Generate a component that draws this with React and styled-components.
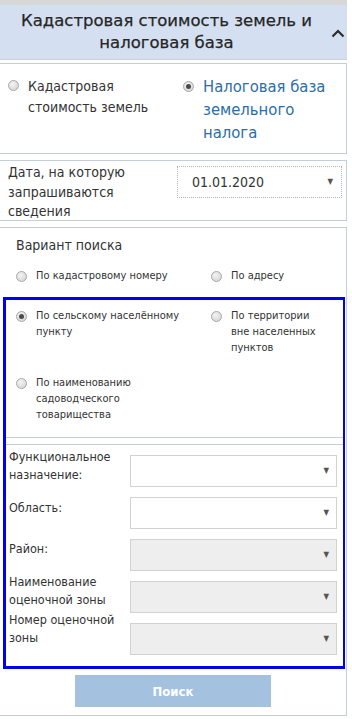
import React from "react";
import styled, { createGlobalStyle } from "styled-components";

const GlobalStyle = createGlobalStyle`
  html, body {
    margin: 0;
    padding: 0;
    background: #ffffff;
  }
  body {
    font-family: "DejaVu Sans Condensed", "DejaVu Sans", sans-serif;
    color: #333333;
  }
`;

const searchOptions = [
  { label: "По кадастровому номеру", checked: false },
  { label: "По адресу", checked: false },
];

const areaOptions = [
  { label: "По сельскому населённому пункту", checked: true, width: 160 },
  { label: "По территории вне населенных пунктов", checked: false, width: 92 },
  { label: "По наименованию садоводческого товарищества", checked: false, width: 108 },
];

const fields = [
  { label: "Функциональное назначение:", disabled: false, offset: -7 },
  { label: "Область:", disabled: false, offset: 2 },
  { label: "Район:", disabled: true, offset: 1 },
  { label: "Наименование оценочной зоны", disabled: true, offset: -8 },
  { label: "Номер оценочной зоны", disabled: true, offset: -12 },
];

const Radio = ({ checked, offset }) => (
  <RadioCircle $checked={checked} $offset={offset}>
    {checked && <RadioDot />}
  </RadioCircle>
);

const Arrow = () => <ArrowGlyph>▼</ArrowGlyph>;

const App = () => {
  return (
    <>
      <GlobalStyle />
      <Page>
        <TopStrip />
        <Header>
          <HeaderTitle>Кадастровая стоимость земель и налоговая база</HeaderTitle>
          <Chevron>
            <svg width="14" height="9" viewBox="0 0 14 9">
              <path d="M1.5 7.5 L7 2 L12.5 7.5" fill="none" stroke="#2b2b2b" strokeWidth="2.2" />
            </svg>
          </Chevron>
        </Header>

        <Card>
          <ModeGrid>
            <ModeOption>
              <Radio offset={5} />
              <ModeLabel>Кадастровая стоимость земель</ModeLabel>
            </ModeOption>
            <ModeOption>
              <Radio checked offset={6} />
              <ModeLabel $active>Налоговая база земельного налога</ModeLabel>
            </ModeOption>
          </ModeGrid>
        </Card>

        <Card>
          <DateRow>
            <DateLabel>Дата, на которую запрашиваются сведения</DateLabel>
            <DateSelect>
              <span>01.01.2020</span>
              <Arrow />
            </DateSelect>
          </DateRow>
        </Card>

        <Card $last>
          <SectionTitle>Вариант поиска</SectionTitle>
          <OptionGrid $pad="13px 0 13px 16px">
            {searchOptions.map((o) => (
              <SmallOption key={o.label}>
                <Radio checked={o.checked} offset={3} />
                <SmallLabel>{o.label}</SmallLabel>
              </SmallOption>
            ))}
          </OptionGrid>
          <Highlight>
            <AreaBlock>
              <OptionGrid $pad="8px 0 0 10px" $rowGap="19px">
                {areaOptions.map((o) => (
                  <SmallOption key={o.label}>
                    <Radio checked={o.checked} offset={3} />
                    <SmallLabel $width={o.width}>{o.label}</SmallLabel>
                  </SmallOption>
                ))}
              </OptionGrid>
            </AreaBlock>
            <FieldBlock>
              {fields.map((f) => (
                <FieldRow key={f.label}>
                  <FieldLabel $offset={f.offset}>{f.label}</FieldLabel>
                  <FieldSelect $disabled={f.disabled}>
                    <Arrow />
                  </FieldSelect>
                </FieldRow>
              ))}
            </FieldBlock>
          </Highlight>
          <ButtonRow>
            <SearchButton>Поиск</SearchButton>
          </ButtonRow>
        </Card>
      </Page>
    </>
  );
};

export default App;

const Page = styled.div`
  width: 347px;
`;

const TopStrip = styled.div`
  height: 5px;
  background-color: #e4e4e4;
  background-image: radial-gradient(#c9c9c9 0.6px, transparent 0.8px);
  background-size: 2px 2px;
`;

const Header = styled.div`
  display: flex;
  align-items: center;
  height: 55px;
  background-color: #d8e3f2;
  background-image: radial-gradient(#cfdcee 0.6px, transparent 0.8px);
  background-size: 2px 2px;
  border-bottom: 1px solid #c6d2e2;
  box-sizing: border-box;
`;

const HeaderTitle = styled.div`
  flex: 1;
  text-align: center;
  font-family: "DejaVu Sans", sans-serif;
  font-size: 16.5px;
  line-height: 22px;
  color: #262626;
  padding-left: 2px;
  -webkit-text-stroke: 0.25px #262626;
`;

const Chevron = styled.div`
  width: 16px;
  display: flex;
  justify-content: flex-start;
  padding-top: 3px;
`;

const Card = styled.div`
  margin-top: ${(p) => (p.$last ? "6px" : "3px")};
  & + & {
    margin-top: 6px;
  }
  border: 1px solid #c4cedb;
  border-left: none;
  background: #ffffff;
  box-sizing: border-box;
`;

const ModeGrid = styled.div`
  display: grid;
  grid-template-columns: 175px 1fr;
  padding: 11px 0 0 8px;
  height: 89px;
  box-sizing: border-box;
`;

const ModeOption = styled.div`
  display: flex;
  align-items: flex-start;
  gap: 9px;
`;

const ModeLabel = styled.div`
  font-size: ${(p) => (p.$active ? "16.5px" : "14px")};
  line-height: ${(p) => (p.$active ? "23px" : "21px")};
  color: ${(p) => (p.$active ? "#2c6ea7" : "#333333")};
  width: ${(p) => (p.$active ? "145px" : "130px")};
  margin-top: ${(p) => (p.$active ? "0" : "1px")};
`;

const RadioCircle = styled.span`
  flex: none;
  width: 11px;
  height: 11px;
  margin-top: ${(p) => p.$offset || 0}px;
  border-radius: 50%;
  box-sizing: border-box;
  border: 1px solid #a9a9a9;
  background: radial-gradient(circle at 40% 35%, #f4f4f4, #cfcfcf);
  display: flex;
  align-items: center;
  justify-content: center;
`;

const RadioDot = styled.span`
  width: 5px;
  height: 5px;
  border-radius: 50%;
  background: #4a4a4a;
`;

const DateRow = styled.div`
  display: flex;
  align-items: flex-start;
  justify-content: space-between;
  padding: 2px 4px 0 8px;
  height: 59px;
  box-sizing: border-box;
`;

const DateLabel = styled.div`
  font-size: 14px;
  line-height: 19.5px;
  width: 150px;
`;

const DateSelect = styled.div`
  margin-top: 3px;
  width: 165px;
  height: 32px;
  box-sizing: border-box;
  border: 1px dotted #b8b8b8;
  display: flex;
  align-items: center;
  justify-content: space-between;
  padding: 0 8px 0 14px;
  font-size: 14px;
  color: #333333;
`;

const ArrowGlyph = styled.span`
  font-size: 8px;
  color: #555555;
  line-height: 1;
`;

const SectionTitle = styled.div`
  font-size: 14px;
  line-height: 19px;
  padding: 8px 0 0 16px;
`;

const OptionGrid = styled.div`
  display: grid;
  grid-template-columns: 195px 1fr;
  row-gap: ${(p) => p.$rowGap || "0"};
  padding: ${(p) => p.$pad};
`;

const SmallOption = styled.div`
  display: flex;
  align-items: flex-start;
  gap: 9px;
`;

const SmallLabel = styled.div`
  font-size: 11px;
  line-height: 16px;
  color: #333333;
  max-width: ${(p) => p.$width || 160}px;
`;

const Highlight = styled.div`
  margin: 0 1px 0 3px;
  border: 3px solid #0000f5;
  border-right-width: 2px;
`;

const AreaBlock = styled.div`
  height: 138px;
  box-sizing: border-box;
  border-bottom: 1px solid #c4cedb;
`;

const FieldBlock = styled.div`
  margin-top: 6px;
  border-top: 1px solid #c4cedb;
  padding: 10px 6px 11px 3px;
  display: flex;
  flex-direction: column;
  gap: 10px;
`;

const FieldRow = styled.div`
  display: flex;
  align-items: flex-start;
  justify-content: space-between;
  min-height: 32px;
`;

const FieldLabel = styled.div`
  font-size: 12.5px;
  line-height: 18px;
  width: 120px;
  margin-top: ${(p) => p.$offset}px;
  margin-bottom: ${(p) => (p.$offset < 0 ? 0 : -20)}px;
  color: #333333;
`;

const FieldSelect = styled.div`
  flex: none;
  width: 207px;
  height: 32px;
  box-sizing: border-box;
  border: 1px solid #d2d2d2;
  background: ${(p) => (p.$disabled ? "#eeeeee" : "#ffffff")};
  display: flex;
  align-items: center;
  justify-content: flex-end;
  padding-right: 7px;
`;

const ButtonRow = styled.div`
  display: flex;
  padding: 6px 0 8px 75px;
`;

const SearchButton = styled.button`
  width: 196px;
  height: 32px;
  border: none;
  background: #a4c2df;
  color: #ffffff;
  font-family: "DejaVu Sans Condensed", "DejaVu Sans", sans-serif;
  font-weight: bold;
  font-size: 13px;
`;
